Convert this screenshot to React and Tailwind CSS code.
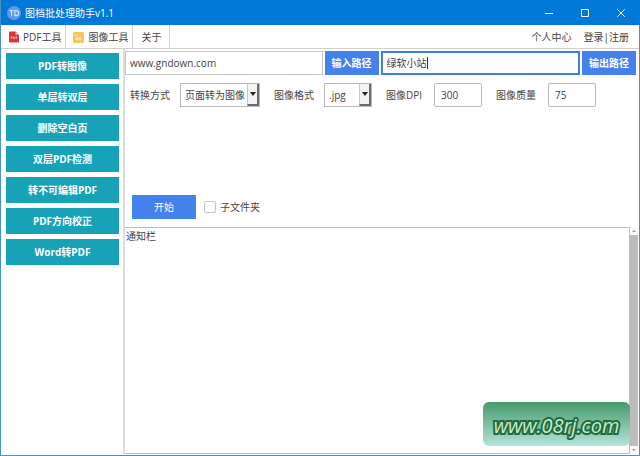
import React, { useState } from "react";

const sideActions = [
  "PDF转图像",
  "单层转双层",
  "删除空白页",
  "双层PDF检测",
  "转不可编辑PDF",
  "PDF方向校正",
  "Word转PDF",
];

const TitleBar = () => (
  <header className="-mr-px flex h-[25px] shrink-0 items-center bg-[#0078d7] text-white">
    <svg className="ml-1.5 size-3.5" viewBox="0 0 12 12">
      <circle cx="6" cy="6" r="6" fill="#5b9bea" />
      <path d="M2.2 4h3.4M3.9 4v4.3M6.8 4v4.3h1a2.1 2.1 0 0 0 0-4.3z" fill="none" stroke="#cfe3ff" strokeWidth="1" />
    </svg>
    <h1 className="ml-1 flex-1">图档批处理助手v1.1</h1>
    <button className="flex h-6 w-9 items-center justify-center" aria-label="最小化">
      <svg className="size-2" viewBox="0 0 8 8" stroke="#fff">
        <path d="M0 4.5h8" />
      </svg>
    </button>
    <button className="flex h-6 w-9 items-center justify-center" aria-label="最大化">
      <svg className="size-2" viewBox="0 0 8 8" stroke="#fff" fill="none">
        <path d="M.5.5h7v7h-7z" />
      </svg>
    </button>
    <button className="mr-px flex h-6 w-9 items-center justify-center" aria-label="关闭">
      <svg className="size-2" viewBox="0 0 8 8" stroke="#fff">
        <path d="M.3.3l7.4 7.4M7.7.3L.3 7.7" />
      </svg>
    </button>
  </header>
);

const PdfIcon = () => (
  <svg className="h-3 w-2.5" viewBox="0 0 10 12">
    <path d="M1 .5h5.5L10 4v7.5H1A1 1 0 0 1 0 10.500V1.500A1 1 0 0 1 1 .5z" fill="#d93437" />
    <path d="M6.500.5L10 4H6.500z" fill="#f2a3a3" />
    <path d="M2 7.800V5.800h1v1H2M4.500 5.800v2h.8v-2zM7 7.800v-2h1.300M7 6.800h1" fill="none" stroke="#f7d0d0" strokeWidth=".7" />
  </svg>
);

const ImageIcon = () => (
  <svg className="size-3" viewBox="0 0 12 12">
    <rect x="1" y="1" width="11" height="11" rx="1.500" fill="#f6c65c" />
    <path d="M3 8.500l2-2.500 1.500 1.500L8 6l1.500 2.500z" fill="#fff3d2" />
    <circle cx="4" cy="4.500" r=".8" fill="#fff3d2" />
  </svg>
);

const TabBar = () => (
  <nav className="flex h-6 shrink-0 border-b border-[#d0d0d0]">
    <button className="flex items-center gap-1 border-r border-[#d0d0d0] pr-1 pl-2">
      <PdfIcon />
      PDF工具
    </button>
    <button className="flex items-center gap-1 border-r border-[#d0d0d0] pr-1 pl-1.5">
      <ImageIcon />
      图像工具
    </button>
    <button className="border-r border-[#d0d0d0] px-2">关于</button>
    <div className="flex flex-1 items-center justify-end gap-3 pr-2.5">
      <a href="#profile">个人中心</a>
      <a href="#login">登录|注册</a>
    </div>
  </nav>
);

const SelectField = ({ id, label, options }) => (
  <div className="flex items-center gap-2.5">
    <label htmlFor={id}>{label}</label>
    <div className="flex h-6 border border-[#b9b9b9]">
      <select id={id} className="min-w-[34px] appearance-none pr-0.5 pl-1 outline-none">
        {options.map((o) => (
          <option key={o}>{o}</option>
        ))}
      </select>
      <span className="flex w-3 items-center justify-center border-r-2 border-b-2 border-l border-[#6b6b6b] border-l-[#c8c8c8] bg-[#f4f4f4]">
        <svg className="h-1 w-1.5" viewBox="0 0 6 4">
          <path d="M0 0h6L3 4z" fill="#222" />
        </svg>
      </span>
    </div>
  </div>
);

const NumberField = ({ id, label, value }) => (
  <div className="flex items-center gap-3">
    <label htmlFor={id}>{label}</label>
    <input id={id} defaultValue={value} className="h-6 w-12 rounded-xs border border-[#b9b9b9] px-1.5 outline-none" />
  </div>
);

const App = () => {
  const [inputPath, setInputPath] = useState("www.gndown.com");
  const [outputPath, setOutputPath] = useState("绿软小站");

  return (
    <div className="flex min-h-screen flex-col border border-t-0 border-[#4a90cc] bg-white font-['Open_Sans','Noto_Sans_CJK_SC',sans-serif] text-[10px] leading-4 text-[#444]">
      <TitleBar />
      <TabBar />

      <div className="flex flex-1 pr-px pb-px">
        <aside className="flex w-[124px] shrink-0 flex-col gap-[5px] border-r-2 border-[#dcdcdc] pt-1 pr-1 pl-[5px]">
          {sideActions.map((text) => (
            <button key={text} className="h-[26px] bg-[#17a2b8] font-bold text-white">
              {text}
            </button>
          ))}
        </aside>

        <main className="flex min-w-0 flex-1 flex-col">
          {/* Paths */}
          <div className="flex gap-0.5 pt-0.5 pr-0.5">
            <input
              aria-label="输入路径"
              value={inputPath}
              onChange={(e) => setInputPath(e.target.value)}
              className="h-6 min-w-0 flex-1 border border-[#c4c4c4] px-1 outline-none"
            />
            <button className="w-[54px] bg-[#4581ec] font-bold text-white">输入路径</button>
            <div className="flex h-6 min-w-0 flex-1 items-center border-2 border-[#3f7fdc] px-1">
              <input
                aria-label="输出路径"
                value={outputPath}
                onChange={(e) => setOutputPath(e.target.value)}
                className="field-sizing-content max-w-full caret-transparent outline-none"
              />
              <span className="h-3 w-px bg-[#333]" />
            </div>
            <button className="w-[54px] bg-[#4581ec] font-bold text-white">输出路径</button>
          </div>

          {/* Conversion options */}
          <div className="flex flex-wrap gap-3.5 pt-2 pl-[5px]">
            <SelectField id="mode" label="转换方式" options={["页面转为图像"]} />
            <SelectField id="format" label="图像格式" options={[".jpg", ".png"]} />
            <NumberField id="dpi" label="图像DPI" value="300" />
            <NumberField id="quality" label="图像质量" value="75" />
          </div>

          <div className="mt-[88px] flex items-center gap-2 pl-[7px]">
            <button className="h-6 w-16 bg-[#4581ec] text-white">开始</button>
            <label className="flex items-center gap-1">
              <input type="checkbox" className="size-3 appearance-none rounded-xs border border-[#c4c4c4] bg-white" />
              子文件夹
            </label>
          </div>

          {/* Notice log */}
          <div className="relative mt-2 flex flex-1">
            <textarea
              aria-label="通知栏"
              defaultValue="通知栏"
              className="min-w-0 flex-1 resize-none border border-l-0 border-[#bdbdbd] px-px outline-none"
            />
            <div className="flex w-2 flex-col bg-[#fafafa]">
              <span className="flex h-2 items-center justify-center">
                <svg className="h-0.5 w-1" viewBox="0 0 4 2">
                  <path d="M0 2h4L2 0z" fill="#999" />
                </svg>
              </span>
              <span className="flex-1 bg-[#bcbcbc]" />
              <span className="flex h-2 items-center justify-center">
                <svg className="h-0.5 w-1" viewBox="0 0 4 2">
                  <path d="M0 0h4L2 2z" fill="#999" />
                </svg>
              </span>
            </div>
            <div className="absolute right-2 bottom-2 flex h-11 w-[147px] items-center justify-center rounded-md bg-linear-to-b from-[#479a6b] to-[#b5e3dc] pt-1">
              <span className="font-['Open_Sans',sans-serif] text-xl font-medium text-[#c9ecc9] italic [paint-order:stroke] [-webkit-text-stroke:4px_#206b40]">
                www.08rj.com
              </span>
            </div>
          </div>
        </main>
      </div>
    </div>
  );
};

export default App;
